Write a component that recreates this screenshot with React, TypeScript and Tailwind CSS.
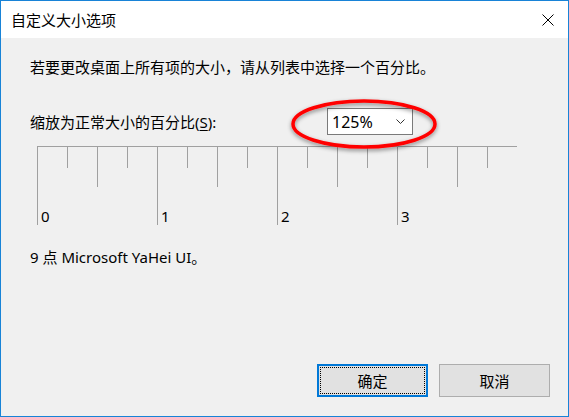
import React from "react";

const ticks = Array.from({ length: 16 }, (_, i) => i);

const tickHeight = (i: number) => {
  if (i % 4 === 0) return "h-[78px]";
  if (i % 2 === 0) return "h-[40px]";
  return "h-[21px]";
};

const App: React.FC = () => {
  return (
    <div
      className="relative flex h-[417px] w-[569px] flex-col border border-[#1883d7] bg-[#f0f0f0] text-[15px] text-black"
      style={{ fontFamily: '"Noto Sans", "Noto Sans CJK SC", sans-serif' }}
    >
      {/* title bar */}
      <div className="flex h-[37px] shrink-0 items-center justify-between bg-white pl-[10px] pr-[14px]">
        <span className="leading-[20px]">自定义大小选项</span>
        <svg width="12" height="12" viewBox="0 0 12 12">
          <path d="M0.5 0.5 L11.5 11.5 M11.5 0.5 L0.5 11.5" stroke="#000" strokeWidth="1" />
        </svg>
      </div>

      <div className="flex flex-1 flex-col px-[29px]">
        <p className="mt-[19px] leading-[20px]">若要更改桌面上所有项的大小，请从列表中选择一个百分比。</p>

        <div className="mt-[31px] flex h-[27px] items-center">
          <span className="w-[297px] leading-[20px]">
            缩放为正常大小的百分比(<span className="underline underline-offset-2">S</span>):
          </span>
          <div className="flex h-[27px] w-[86px] items-center justify-between border border-[#7a7a7a] bg-white pl-[4px] pr-[7px]">
            <span className="text-[16px] leading-[20px]">125%</span>
            <svg width="9" height="5" viewBox="0 0 9 5">
              <path d="M0.5 0.5 L4.5 4.5 L8.5 0.5" fill="none" stroke="#333" strokeWidth="1" />
            </svg>
          </div>
        </div>

        {/* ruler */}
        <div className="ml-[7px] mt-[11px] flex w-[480px] border-t border-[#a0a0a0]">
          {ticks.map((i) => (
            <div key={i} className="flex h-[78px] w-[30px] items-start">
              <div className={`w-0 border-l border-[#a0a0a0] ${tickHeight(i)}`} />
              {i % 4 === 0 && (
                <span className="ml-[3px] self-end leading-[18px]">{i / 4}</span>
              )}
            </div>
          ))}
        </div>

        <p className="mt-[22px] leading-[20px]">9 点 Microsoft YaHei UI。</p>

        <div className="flex-1" />

        <div className="-mr-[11px] mb-[19px] flex justify-end gap-[11px]">
          <button className="flex h-[33px] w-[111px] items-center justify-center border-2 border-[#0078d7] bg-[#e1e1e1] p-[1px]">
            <span className="flex h-full w-full items-center justify-center border border-dotted border-black leading-[20px]">
              确定
            </span>
          </button>
          <button className="flex h-[33px] w-[111px] items-center justify-center border border-[#adadad] bg-[#e1e1e1] leading-[20px]">
            取消
          </button>
        </div>
      </div>

      {/* red highlight ellipse drawn over the dropdown */}
      <svg
        className="pointer-events-none absolute left-[283px] top-[93px]"
        width="164"
        height="64"
        viewBox="0 0 164 64"
      >
        <defs>
          <filter id="sh" x="-10%" y="-30%" width="120%" height="160%">
            <feDropShadow dx="0" dy="2" stdDeviation="2" floodColor="#000" floodOpacity="0.45" />
          </filter>
        </defs>
        <ellipse cx="80" cy="30" rx="71" ry="23" fill="none" stroke="#ff0000" strokeWidth="3.5" filter="url(#sh)" />
      </svg>
    </div>
  );
};

export default App;
